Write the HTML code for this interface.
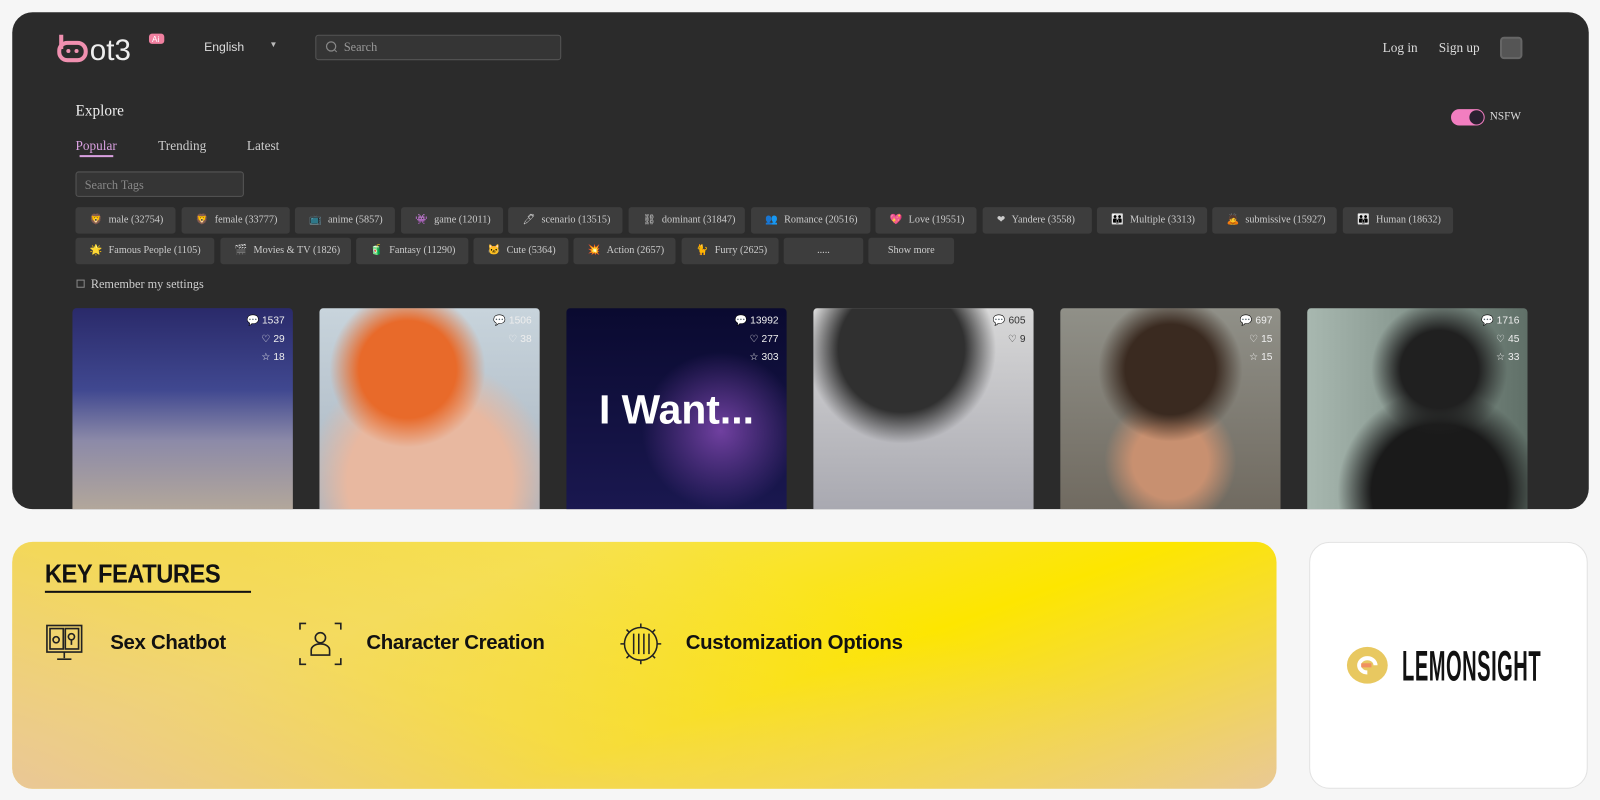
<!DOCTYPE html>
<html><head><meta charset="utf-8"><style>
*{box-sizing:border-box;margin:0;padding:0}
body{width:1600px;height:800px;background:#f6f6f6;position:relative;overflow:hidden;font-family:"Liberation Serif",serif}
#w{position:absolute;left:0;top:0;width:1568px;height:784px;transform:scale(1.0204);transform-origin:0 0}
.dark{position:absolute;left:12px;top:12px;width:1545px;height:487px;background:#2b2b2b;border-radius:20px;overflow:hidden;color:#ddd}
.a{position:absolute}
.tag{position:absolute;height:26px;background:#3d3d3d;border-radius:3px;font-size:10px;color:#ccc;line-height:26px;padding-left:14px;white-space:nowrap}
.tag i{font-style:normal;margin-right:6px;font-size:10px}
.card{position:absolute;top:290px;width:216px;height:200px;border-radius:4px 4px 0 0;overflow:hidden}
.st{position:absolute;right:8px;font-size:10px;line-height:18px;color:#eee;font-family:"Liberation Sans",sans-serif;text-align:right}
.yel{position:absolute;left:12px;top:531px;width:1239px;height:242px;border-radius:20px;background:linear-gradient(160deg,#f6dd3a 0%,#f7e24a 30%,#fde600 60%,#e9c896 100%);font-family:"Liberation Sans",sans-serif;color:#111}
.yel2{position:absolute;inset:0;border-radius:20px;background:linear-gradient(20deg,rgba(232,196,160,.9) 0%,rgba(240,210,120,.5) 35%,rgba(255,230,0,0) 70%)}
.feat{position:absolute;top:88px;font-size:20px;font-weight:bold;letter-spacing:-0.3px}
.lem{position:absolute;left:1283px;top:531px;width:273px;height:242px;border-radius:20px;background:#fff;border:1px solid #e2e2e2}
</style></head><body><div id="w">
<div class="dark">
 <svg class="a" style="left:44px;top:20px" width="106" height="30" viewBox="0 0 106 30"><rect x="2" y="10" width="26" height="17" rx="8" fill="none" stroke="#f090b0" stroke-width="4"/><line x1="4" y1="2" x2="4" y2="16" stroke="#f090b0" stroke-width="4"/><circle cx="11" cy="18" r="2" fill="#f090b0"/><circle cx="19" cy="18" r="2" fill="#f090b0"/><text x="32" y="27" font-family="Liberation Sans" font-size="29" fill="#eee">ot3</text><rect x="90" y="1" width="15" height="10" rx="3" fill="#f080a0"/><text x="93" y="9" font-size="8" fill="#fff" font-family="Liberation Sans">Ai</text></svg>
 <div class="a" style="left:188px;top:27px;font-size:12px;font-family:'Liberation Sans',sans-serif;color:#ddd">English</div>
 <div class="a" style="left:252px;top:27px;font-size:8px;color:#bbb">▼</div>
 <div class="a" style="left:297px;top:22px;width:241px;height:25px;border:1px solid #555;border-radius:3px;background:#353535"></div>
 <svg class="a" style="left:307px;top:28px" width="12" height="12"><circle cx="5.5" cy="5.5" r="4.5" fill="none" stroke="#888" stroke-width="1.2"/><line x1="9" y1="9" x2="11" y2="11" stroke="#888"/></svg>
 <div class="a" style="left:325px;top:27px;font-size:12px;color:#999">Search</div>
 <div class="a" style="left:1343px;top:27px;font-size:13px;color:#ddd">Log in</div>
 <div class="a" style="left:1398px;top:27px;font-size:13px;color:#ddd">Sign up</div>
 <div class="a" style="left:1458px;top:24px;width:22px;height:22px;border-radius:4px;background:#555;border:2px solid #666"></div>
 <div class="a" style="left:62px;top:89px;font-size:15px;color:#eee">Explore</div>
 <div class="a" style="left:62px;top:123px;font-size:13px;color:#d9a0e0">Popular</div>
 <div class="a" style="left:66px;top:140px;width:33px;height:2px;background:#d9a0e0"></div>
 <div class="a" style="left:143px;top:123px;font-size:13px;color:#ccc">Trending</div>
 <div class="a" style="left:230px;top:123px;font-size:13px;color:#ccc">Latest</div>
 <div class="a" style="left:62px;top:156px;width:165px;height:25px;border:1px solid #555;border-radius:3px;background:#353535;font-size:12px;color:#888;padding:5px 8px">Search Tags</div>
 <div class="a" style="left:1410px;top:95px;width:33px;height:16px;border-radius:8px;background:#f27ec0"></div>
 <div class="a" style="left:1428px;top:96px;width:14px;height:14px;border-radius:7px;background:#2a2030"></div>
 <div class="a" style="left:1448px;top:96px;font-size:11px;color:#ddd">NSFW</div>

 <div class="tag" style="left:62px;top:191px;width:98px"><i>🦁</i>male (32754)</div>
 <div class="tag" style="left:166px;top:191px;width:106px"><i>🦁</i>female (33777)</div>
 <div class="tag" style="left:277px;top:191px;width:98px"><i>📺</i>anime (5857)</div>
 <div class="tag" style="left:381px;top:191px;width:100px"><i>👾</i>game (12011)</div>
 <div class="tag" style="left:486px;top:191px;width:112px"><i>🖊</i>scenario (13515)</div>
 <div class="tag" style="left:604px;top:191px;width:114px"><i>⛓</i>dominant (31847)</div>
 <div class="tag" style="left:724px;top:191px;width:117px"><i>👥</i>Romance (20516)</div>
 <div class="tag" style="left:846px;top:191px;width:99px"><i>💖</i>Love (19551)</div>
 <div class="tag" style="left:951px;top:191px;width:107px"><i>❤</i>Yandere (3558)</div>
 <div class="tag" style="left:1063px;top:191px;width:108px"><i>👪</i>Multiple (3313)</div>
 <div class="tag" style="left:1176px;top:191px;width:122px"><i>🙇</i>submissive (15927)</div>
 <div class="tag" style="left:1304px;top:191px;width:108px"><i>👪</i>Human (18632)</div>
 <div class="tag" style="left:62px;top:221px;width:136px"><i>🌟</i>Famous People (1105)</div>
 <div class="tag" style="left:204px;top:221px;width:128px"><i>🎬</i>Movies &amp; TV (1826)</div>
 <div class="tag" style="left:337px;top:221px;width:110px"><i>🧃</i>Fantasy (11290)</div>
 <div class="tag" style="left:452px;top:221px;width:93px"><i>🐱</i>Cute (5364)</div>
 <div class="tag" style="left:550px;top:221px;width:100px"><i>💥</i>Action (2657)</div>
 <div class="tag" style="left:656px;top:221px;width:95px"><i>🐈</i>Furry (2625)</div>
 <div class="tag" style="left:756px;top:221px;width:78px;padding:0;text-align:center">.....</div>
 <div class="tag" style="left:839px;top:221px;width:84px;padding:0;text-align:center">Show more</div>
 <div class="a" style="left:63px;top:262px;width:8px;height:8px;border:1px solid #888"></div>
 <div class="a" style="left:77px;top:259px;font-size:12px;color:#ccc">Remember my settings</div>

 <div class="card" style="left:59px;background:linear-gradient(180deg,#2a2a6a 0%,#404890 40%,#8c8aa8 65%,#b4a89a 100%)"><div class="st" style="top:4px">💬 1537<br>♡ 29<br>☆ 18</div></div>
 <div class="card" style="left:301px;background:radial-gradient(circle at 40% 30%,#e86a2a 0 25%,transparent 40%),radial-gradient(circle at 50% 85%,#e8b8a0 0 40%,transparent 60%),linear-gradient(#c8d4dc,#a8b4c0)"><div class="st" style="top:4px">💬 1506<br>♡ 38</div></div>
 <div class="card" style="left:543px;background:radial-gradient(circle at 70% 60%,#7040a0,transparent 40%),linear-gradient(#0a0a30,#1a1850)"><div class="st" style="top:4px">💬 13992<br>♡ 277<br>☆ 303</div><div class="a" style="left:32px;top:78px;font-size:40px;color:#fff;font-family:'Liberation Sans',sans-serif;font-weight:bold">I Want...</div></div>
 <div class="card" style="left:785px;background:radial-gradient(circle at 40% 20%,#303030 0 30%,transparent 45%),linear-gradient(#d8d8d8,#a8a8b0)"><div class="st" style="top:4px;color:#333">💬 605<br>♡ 9</div></div>
 <div class="card" style="left:1027px;background:radial-gradient(circle at 50% 30%,#3a2a20 0 25%,transparent 40%),radial-gradient(circle at 50% 75%,#c89070 0 20%,transparent 35%),linear-gradient(#909088,#706a60)"><div class="st" style="top:4px">💬 697<br>♡ 15<br>☆ 15</div></div>
 <div class="card" style="left:1269px;background:radial-gradient(circle at 60% 30%,#202020 0 20%,transparent 35%),radial-gradient(circle at 60% 90%,#1a1a1a 0 30%,transparent 45%),linear-gradient(90deg,#a8b8b0,#607068)"><div class="st" style="top:4px">💬 1716<br>♡ 45<br>☆ 33</div></div>
</div>

<div class="yel"><div class="yel2"></div>
 <div class="a" style="left:32px;top:18px;font-size:25px;font-weight:bold;letter-spacing:-0.5px;transform:scaleX(0.93);transform-origin:left">KEY FEATURES</div>
 <div class="a" style="left:32px;top:48px;width:202px;height:2px;background:#111"></div>
 <svg class="a" style="left:32px;top:80px" width="40" height="40" viewBox="0 0 40 40" fill="none" stroke="#222" stroke-width="1.6"><rect x="2" y="2" width="34" height="26"/><rect x="5" y="5" width="13" height="20"/><rect x="20" y="5" width="13" height="20"/><line x1="19" y1="28" x2="19" y2="34"/><line x1="12" y1="35" x2="26" y2="35"/><circle cx="11" cy="16" r="3"/><circle cx="26" cy="13" r="3"/><line x1="26" y1="16" x2="26" y2="21"/></svg>
 <div class="feat" style="left:96px">Sex Chatbot</div>
 <svg class="a" style="left:280px;top:78px" width="44" height="44" viewBox="0 0 44 44" fill="none" stroke="#222" stroke-width="1.6"><path d="M2 8V2h6M36 2h6v6M2 36v6h6M36 42h6v-6"/><circle cx="22" cy="16" r="5"/><path d="M13 33v-5a9 6 0 0 1 18 0v5z"/></svg>
 <div class="feat" style="left:347px">Character Creation</div>
 <svg class="a" style="left:594px;top:78px" width="44" height="44" viewBox="0 0 44 44" fill="none" stroke="#222" stroke-width="1.5"><circle cx="22" cy="22" r="16"/><path d="M22 2v4M22 38v4M2 22h4M38 22h4M8 8l3 3M33 33l3 3M8 36l3-3M33 11l3-3"/><path d="M15 12v20M20 12v20M25 12v20M30 12v20"/></svg>
 <div class="feat" style="left:660px">Customization Options</div>
</div>
<div class="lem">
 <svg class="a" style="left:34px;top:100px" width="44" height="40" viewBox="0 0 44 40"><ellipse cx="22" cy="20" rx="20" ry="18" fill="#e8c860"/><path d="M30 20a8 7 0 1 0-8 7" fill="none" stroke="#fff" stroke-width="4"/><path d="M16 20h10" stroke="#f09060" stroke-width="4"/></svg>
 <div class="a" style="left:90px;top:97px;font-size:42px;font-family:'Liberation Sans',sans-serif;font-weight:bold;color:#111;transform:scaleX(0.47);transform-origin:left;letter-spacing:1px">LEMONSIGHT</div>
</div>
</div></body></html>
